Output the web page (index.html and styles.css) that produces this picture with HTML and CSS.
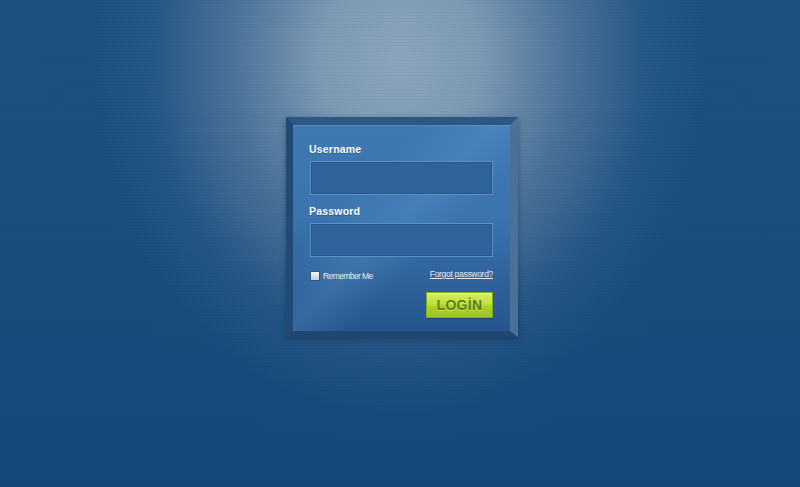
FILE: index.html
```html
<!DOCTYPE html>
<html>
<head>
<meta charset="utf-8">
<link rel="stylesheet" href="styles.css">
</head>
<body>
<div class="page">
  <div class="frame">
    <form class="panel">
      <label class="label">Username</label>
      <div class="field"></div>
      <label class="label label-pass">Password</label>
      <div class="field"></div>
      <div class="options">
        <span class="remember"><span class="check"></span>Remember Me</span>
        <a class="forgot">Forgot password?</a>
      </div>
      <div class="actions">
        <button type="button" class="login">LOGİN</button>
      </div>
    </form>
  </div>
</div>
</body>
</html>
```
FILE: styles.css
```css
html, body {
  margin: 0;
  padding: 0;
  height: 100%;
}
body {
  background-color: #174a7b;
  background-image:
    repeating-linear-gradient(180deg, rgba(0,0,0,0.025) 0px, rgba(0,0,0,0.025) 1px, transparent 1px, transparent 3px),
    radial-gradient(ellipse 360px 420px at 400px 60px, rgba(140,165,188,1) 0%, rgba(130,158,184,0.95) 22%, rgba(95,130,165,0.75) 45%, rgba(55,100,145,0.4) 68%, rgba(30,80,128,0.12) 85%, rgba(26,78,126,0) 100%),
    linear-gradient(180deg, #1d527f 0%, #1a4e7e 50%, #15477a 100%);
  font-family: "Liberation Sans", Arial, sans-serif;
  overflow: hidden;
}
.page {
  display: flex;
  justify-content: center;
  padding-top: 117px;
  padding-left: 4px;
}
.frame {
  width: 217px;
  border-style: solid;
  border-width: 8px 8px 6px 7px;
  border-color: #2b5782 #4b7198 #1f4771 #214a76;
  box-shadow: 0 2px 6px rgba(10, 35, 65, 0.45);
}
.panel {
  display: flex;
  flex-direction: column;
  padding: 18px 17px 12px 16px;
  height: 176px;
  background:
    linear-gradient(135deg, rgba(255,255,255,0) 30%, rgba(120,180,230,0.18) 48%, rgba(255,255,255,0) 62%),
    linear-gradient(180deg, #3f79b3 0%, #3b74ae 45%, #2d5f98 80%, #27568e 100%);
  box-shadow: inset 0 1px 0 rgba(120,170,220,0.35);
}
.label {
  color: #ffffff;
  font-weight: bold;
  font-size: 10.5px;
  letter-spacing: 0.2px;
  line-height: 12px;
  height: 12px;
  text-shadow: 0 1px 0 rgba(20,50,90,0.4);
}
.label-pass {
  margin-top: 10px;
}
.field {
  margin-top: 6px;
  margin-left: 1px;
  height: 32px;
  background: #30639b;
  border: 1px solid #5e92c7;
  box-shadow: inset 0 0 0 1px rgba(30,70,120,0.45);
}
.options {
  display: flex;
  justify-content: space-between;
  align-items: flex-start;
  margin-top: 12px;
  margin-left: 2px;
  height: 14px;
}
.remember {
  display: flex;
  align-items: center;
  color: #e8eef5;
  font-size: 8.5px;
  letter-spacing: -0.6px;
  margin-top: 2px;
}
.check {
  width: 8px;
  height: 8px;
  margin-right: 4px;
  background: linear-gradient(180deg, #f4f4f4, #c9cdd2);
  box-shadow: 0 0 0 1px rgba(30,60,100,0.35);
}
.forgot {
  color: #e6eef6;
  font-size: 8.5px;
  letter-spacing: -0.3px;
  text-decoration: underline;
  text-underline-offset: 1px;
}
.actions {
  display: flex;
  justify-content: flex-end;
  margin-top: 9px;
}
.login {
  width: 67px;
  height: 26px;
  padding: 0;
  border: 1px solid #7fae22;
  background: linear-gradient(180deg, #d3ee5e 0%, #c1e13c 45%, #add12a 55%, #9cc31f 100%);
  box-shadow: inset 0 1px 0 rgba(255,255,255,0.45), 0 1px 1px rgba(10,40,80,0.4);
  color: #5f7e16;
  font-family: "Liberation Sans", Arial, sans-serif;
  font-weight: bold;
  font-size: 14px;
  letter-spacing: 0.3px;
  text-shadow: 0 1px 0 rgba(230,250,150,0.6);
}
```
